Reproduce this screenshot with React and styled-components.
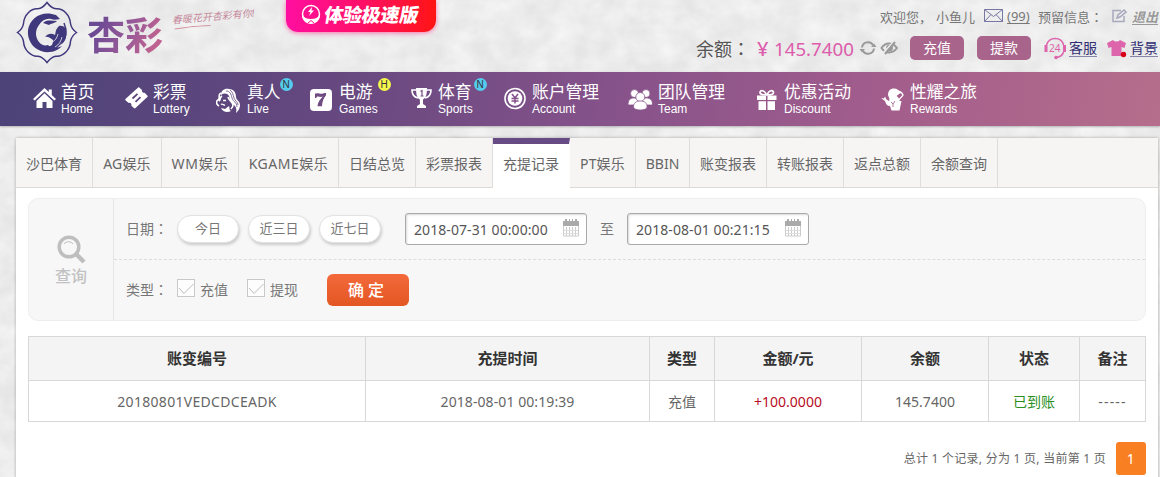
import styled, { createGlobalStyle } from "styled-components";

const sans = `"Noto Sans", "Noto Sans CJK SC", sans-serif`;

const GlobalStyle = createGlobalStyle`
    * {
        box-sizing: border-box;
    }
    body {
        margin: 0;
        background: #ececec;
        font-family: ${sans};
        font-size: 14px;
        color: #666;
        overflow: hidden;
    }
`;

const Page = styled.div`
    position: relative;
    width: 1160px;
    height: 477px;
    overflow: hidden;
`;

const Texture = styled.svg`
    position: absolute;
    top: 0;
    left: 0;
    z-index: -1;
`;

const Header = styled.header`
    display: flex;
    justify-content: space-between;
    height: 72px;
`;

const Brand = styled.div`
    display: flex;
    align-items: flex-start;
    padding: 1px 0 0 16px;
`;

const BrandName = styled.h1`
    margin: 5px 0 0 9px;
    width: 76px;
    font-size: 38px;
    line-height: 56px;
    font-weight: 700;
    white-space: nowrap;
    background: linear-gradient(115deg, #6d4a94 20%, #9a5a98 55%, #c0628f 85%);
    -webkit-background-clip: text;
    color: transparent;
`;

const Slogan = styled.div`
    margin: 8px 0 0 9px;
    width: 86px;
    font-size: 10px;
    line-height: 15px;
    font-style: italic;
    white-space: nowrap;
    color: #c58a9c;
    transform: rotate(-5deg);
    svg {
        display: block;
    }
`;

const Promo = styled.div`
    position: absolute;
    top: 0;
    left: 286px;
    display: flex;
    gap: 3px;
    width: 150px;
    height: 32px;
    padding: 3px 0 0 15px;
    border-radius: 0 0 12px 12px;
    background: linear-gradient(90deg, #ff0fa0, #ff1068 50%, #ff1414);
    box-shadow: 0 1px 5px rgba(255, 30, 130, 0.6);
    color: #fff;
    font-size: 19px;
    font-weight: 900;
    line-height: 24px;
    letter-spacing: -0.2px;
    white-space: nowrap;
    span {
        transform: skewX(-10deg);
    }
`;

const Account = styled.div`
    width: 470px;
    padding-top: 6px;
    white-space: nowrap;
`;

const Welcome = styled.div`
    display: flex;
    align-items: center;
    height: 20px;
    padding-left: 190px;
    font-size: 13px;
    color: #777;
`;

const Piece = styled.span`
    flex: none;
    width: ${(props) => props.w}px;
    text-decoration: ${(props) => (props.underline ? "underline" : "none")};
    text-underline-offset: 2px;
    svg {
        display: block;
    }
`;

// the TC face centres the full-width colon in its cell
const Colon = styled.span`
    font-family: "Noto Sans CJK TC", sans-serif;
`;

const Logout = styled.a`
    font-weight: bold;
    font-style: italic;
    text-decoration: underline;
    text-underline-offset: 2px;
    color: #999;
`;

const Balance = styled.div`
    display: flex;
    align-items: center;
    height: 30px;
    margin-top: 7px;
    padding-left: 6px;
    svg {
        display: block;
        flex: none;
    }
`;

const BalanceLabel = styled.span`
    width: 61px;
    font-size: 18px;
    color: #555;
`;

const Amount = styled.span`
    width: 103px;
    font-size: 18.7px;
    color: #dd5cab;
    b {
        display: inline-block;
        width: 17px;
        font-size: 20px;
        font-weight: 500;
    }
`;

const PinkButton = styled.button`
    width: 54px;
    height: 24px;
    margin-right: ${(props) => props.gap || 0}px;
    padding: 0 0 1px;
    border: 0;
    border-radius: 5px;
    background: #a9648c;
    color: #fff;
    font: 14px/22px ${sans};
`;

const ToolLink = styled.a`
    width: 28px;
    margin: 0 ${(props) => props.gap || 0}px 0 3px;
    border-bottom: 1px solid #8585aa;
    line-height: 17px;
    font-size: 14px;
    color: #2f2d73;
`;

const Nav = styled.nav`
    display: flex;
    height: 54px;
    padding-left: 33px;
    background: linear-gradient(98deg, #4c4379 0%, #65487f 28%, #85528a 52%, #a25d8c 76%, #b56e8b 100%);
    box-shadow: 0 1px 2px rgba(0, 0, 0, 0.25);
    color: #fff;
`;

const NavItem = styled.a`
    display: flex;
    flex: none;
    width: ${(props) => props.w}px;
    svg {
        display: block;
        margin-top: 15px;
    }
`;

const NavIcon = styled.span`
    flex: none;
    width: ${(props) => props.w}px;
`;

const NavText = styled.span`
    position: relative;
    padding-top: 10px;
    font-size: 16.8px;
    line-height: 20px;
    white-space: nowrap;
    height: 54px;
    small {
        display: block;
        font: 12px/14px "Liberation Sans", Arial, sans-serif;
    }
`;

const Badge = styled.i`
    position: absolute;
    top: 6px;
    right: ${(props) => props.right}px;
    width: 13px;
    height: 13px;
    border-radius: 50%;
    background: ${(props) => props.color};
    color: #33333f;
    font: 10px/13px "Liberation Sans", Arial, sans-serif;
    text-align: center;
`;

const Panel = styled.main`
    width: 1142px;
    height: 360px;
    margin: 12px 0 0 16px;
    background: #fff;
    box-shadow: 0 0 3px rgba(0, 0, 0, 0.3);
`;

const Tabs = styled.div`
    display: flex;
    height: 50px;
    background: #f6f5f4;
    border-bottom: 1px solid #dcdad8;
`;

const Tab = styled.a`
    width: ${(props) => props.w}px;
    height: 50px;
    padding-top: ${(props) => (props.active ? 0 : 6)}px;
    border-right: 1px solid ${(props) => (props.active ? "#fff" : "#dfdddb")};
    border-top: ${(props) => (props.active ? "6px solid #674b84" : "0")};
    background: ${(props) => (props.active ? "#fff" : "transparent")};
    line-height: 39px;
    letter-spacing: ${(props) => props.spacing}px;
    text-align: center;
    white-space: nowrap;
`;

const Filter = styled.section`
    display: flex;
    height: 123px;
    margin: 10px 12px 0;
    border: 1px solid #eee;
    border-radius: 10px;
    background: #f7f7f7;
`;

const FilterTitle = styled.div`
    display: flex;
    flex-direction: column;
    align-items: center;
    width: 85px;
    padding: 36px 0 0;
    border-right: 1px solid #e6e6e6;
    color: #c2c2c2;
    font-size: 16px;
    font-weight: 500;
    line-height: 25px;
`;

const FilterRows = styled.div`
    flex: 1;
`;

const FilterRow = styled.div`
    display: flex;
    align-items: center;
    height: 60px;
    padding-left: 12px;
    color: #777;
    & + & {
        border-top: 1px dashed #dcdcdc;
    }
`;

const Label = styled.span`
    width: 51px;
    padding-bottom: 2px;
`;

const Pill = styled.button`
    width: 62px;
    height: 28px;
    margin: 0 9px 1px 0;
    padding: 0 0 1px;
    border: 1px solid #e2e2e2;
    border-radius: 14px;
    background: #fff;
    box-shadow: 1px 2px 3px rgba(0, 0, 0, 0.18);
    color: #777;
    font: 13px/20px ${sans};
`;

const DateField = styled.div`
    display: flex;
    justify-content: space-between;
    align-items: center;
    width: 182px;
    height: 32px;
    margin-left: ${(props) => props.offset}px;
    padding: 0 7px 0 8px;
    border: 1px solid #aaa;
    border-radius: 3px;
    background: #fff;
    box-shadow: inset 1px 1px 2px rgba(0, 0, 0, 0.15);
    color: #555;
    svg {
        margin-bottom: 2px;
    }
`;

const DateText = styled.span`
    padding-top: 1px;
    letter-spacing: 0.08px;
`;

const To = styled.span`
    margin-left: 13px;
    padding-bottom: 2px;
`;

const CheckItem = styled.label`
    display: flex;
    align-items: center;
    width: 70px;
    gap: 5px;
`;

const Check = styled.span`
    width: 18px;
    height: 18px;
    margin-bottom: 3px;
    border: 1px solid #c9c9c9;
    background: #fdfdfd;
    svg {
        display: block;
    }
`;

const Submit = styled.button`
    width: 82px;
    height: 32px;
    margin-left: 10px;
    padding: 0 4px 0 0;
    border: 0;
    border-radius: 6px;
    background: linear-gradient(#f4693a, #e35724);
    color: #fff;
    font: 500 16px/30px ${sans};
`;

const Table = styled.table`
    width: 1118px;
    margin: 15px 12px 0;
    border-collapse: collapse;
    table-layout: fixed;
    text-align: center;
    th,
    td {
        padding: 0;
        border: 1px solid #d8d8d8;
    }
    th {
        height: 44px;
        padding-bottom: 2px;
        background: #f4f4f4;
        color: #333;
        font-size: 15px;
        font-weight: 700;
    }
    td {
        height: 41px;
    }
`;

const Value = styled.span`
    color: ${(props) => props.color || "#666"};
    letter-spacing: ${(props) => props.spacing || 0}px;
`;

const Footer = styled.div`
    display: flex;
    justify-content: flex-end;
    align-items: center;
    height: 34px;
    margin: 19px 12px 0;
    font-size: 12px;
    letter-spacing: 0.25px;
`;

const PageNumber = styled.a`
    width: 30px;
    height: 33px;
    margin-left: 10px;
    border-radius: 3px;
    background: #f98022;
    color: #fff;
    font-size: 14px;
    line-height: 33px;
    text-align: center;
`;

const Emblem = () => (
    <svg width="62" height="63" viewBox="0 0 62 63" fill="none">
        <path
            d="M31 1.500C34 5.500 37 7.500 40 7.800 47 7 54 14 54.500 22.500 55 26 57 29 60.500 31.500 57 34 55 37 54.500 40.500 54 49 47 56 40 55.200 37 55.500 34 57.500 31 61.500 28 57.500 25 55.500 22 55.200 15 56 8 49 7.500 40.500 7 37 5 34 1.500 31.500 5 29 7 26 7.500 22.500 8 14 15 7 22 7.800 25 7.500 28 5.500 31 1.500Z"
            stroke="#40387c"
            strokeWidth="1.500"
        />
        <path
            d="M40 14C27 9 14 16 12 29c-1 9 4 18 13 21 8 3 17 0 21-5-6 3-11 2-14-1-3 1-7 0-9-3-4-5-4-12 0-17 3-5 8-7 12-6 2 1 5 1 9 0l-4-4Z"
            fill="#40387c"
        />
        <path d="M27 22c4-4 9-2 14-2-3 3-6 2-8 4l-6-2Z" fill="#40387c" />
        <path
            d="M43 25c5-1 8 3 7 7 1 5-2 10-6 12l-6 6c-4 1-7-2-7-5 5 1 6-2 6-6-3-2-5-4-8-3 3-4 7-4 10-2 1-3 0-5 4-9Z"
            fill="#40387c"
        />
        <path d="M15 37c5 10 14 13 23 9M48 22c3 7 3 14-2 20" stroke="#40387c" strokeWidth="1.500" />
        <path d="M36 41c3-1 5-4 6-8M39 46c4-2 6-6 7-10" stroke="#eee" strokeWidth=".8" />
    </svg>
);

const HomeIcon = () => (
    <svg width="23" height="22" viewBox="0 0 23 22" fill="#fff">
        <path d="M11.500 1 0 12l1.700 1.600L11.500 4.400l9.800 9.200L23 12l-4.200-4V2.500h-3v2.600L11.500 1Z" />
        <path d="M11.500 6.200 3.500 14v7h6v-6h4v6h6v-7l-8-7.800Z" />
    </svg>
);

const TicketIcon = () => (
    <svg width="23" height="22" viewBox="0 0 23 22" fill="#fff">
        <path d="M14.500.7 17 3c-.400 1.900.900 3 2.600 2.800l2.700 2.600c.600.600.600 1 0 1.600L10.500 21c-.600.600-1 .600-1.600 0l-2.500-2.300c.400-2-.900-3.100-2.700-2.800L.700 13.500c-.600-.600-.600-1.100 0-1.700L12.900.7c.600-.600 1-.600 1.600 0Z" />
        <path d="m7.500 11.500 5-4.700M10.500 14.800l5-4.700" stroke="#5d477e" strokeWidth="1.800" />
    </svg>
);

const LiveIcon = () => (
    <svg width="26" height="27" viewBox="0 0 26 27" fill="none" stroke="#fff">
        <path
            d="M5 8C5 3 9 1 13 2c5 0 7 4 7 8 0 3 4 4 4 8 0 3-1 5-4 8 1-4 0-6-2-8-4-3-4-6-5-9-2-3-5-3-8-1Z"
            fill="#fff"
            stroke="none"
        />
        <path d="M5 6C1 8 5 11 2 13s-1 5 1 6M6 9c-3 2-1 4-3 5M12 10c1 4 4 4 5 8 0 2-1 3-2 4" strokeWidth="1.600" />
        <path d="M7 13.500h3M5 17.500c1-1 2 0 4 1" strokeWidth="1.300" />
        <path d="m5 21 4 1 4-3c1 3 0 4 2 5-4 2-8 1-10-3Z" fill="#fff" stroke="none" />
        <path d="M10 4c4 0 5 3 6 7s5 4 5 9M14 3c3 2 3 5 4 8s4 4 4 7" stroke="#65487f" strokeWidth=".8" />
    </svg>
);

const GamesIcon = () => (
    <svg width="23" height="25" viewBox="0 0 23 25">
        <rect y="2" width="22" height="22" rx="4" fill="#fff" />
        <path
            d="M5 6.500h1.500c1.500-1 3 .600 5 .300 1.300 0 2-.300 2.800-.800H16v2.300c-2.700 3.300-3.700 6.500-4 11H7.500c.200-4 2.500-7 5.300-9.800-2 .900-3.500-.100-5-.100-1 0-1.300.600-1.500 1.600H5V6.500Z"
            fill="#704b82"
        />
    </svg>
);

const TrophyIcon = () => (
    <svg width="21" height="23" viewBox="0 0 21 23" fill="#fff">
        <path d="M5 1h11c0 6-1 10-4 11.500L12 17l3 2v2H6v-2l3-2-.200-4.500C6 11 5 7 5 1Z" />
        <path d="M5 3H1c0 4 2 7 6 8M16 3h4c0 4-2 7-6 8" fill="none" stroke="#fff" strokeWidth="1.700" />
        <path d="m9.500 4.500 1.500-1V9M9.500 9h3" fill="none" stroke="#774c83" strokeWidth="1.200" />
    </svg>
);

const CoinIcon = () => (
    <svg width="23" height="23" viewBox="0 0 23 23" fill="none" stroke="#fff">
        <circle cx="11" cy="11.500" r="10" strokeWidth="1.600" />
        <circle cx="11" cy="11.500" r="7.300" fill="#fff" stroke="none" />
        <path d="m8 7 3 4 3-4M7.500 11.500h7M7.500 14h7M11 11v5.500" stroke="#855089" strokeWidth="1.500" />
    </svg>
);

const TeamIcon = () => (
    <svg width="25" height="24" viewBox="0 0 25 24" fill="#fff" stroke="#8a558b" strokeWidth=".8">
        <circle cx="6.500" cy="6.500" r="4" />
        <circle cx="18" cy="6.500" r="4" />
        <path d="M0 18c0-5 2-7 6-7s6 2 6 7H0ZM12.500 18c0-5 2-7 6-7s6 2 6 7h-12Z" />
        <circle cx="12.300" cy="10" r="4.500" />
        <path d="M5.500 20c0-4 2.500-6 6.800-6s6.800 2 6.800 6c0 4-13.600 4-13.600 0Z" />
    </svg>
);

const GiftIcon = () => (
    <svg width="21" height="24" viewBox="0 0 21 24" fill="#fff">
        <path d="M0 8.500h9V13H0V8.500ZM10.500 8.500h9V13h-9V8.500ZM1.500 14.200H9V23H1.500v-8.800ZM10.500 14.200H18V23h-7.500v-8.800Z" />
        <path
            d="M9.500 8C7 8 3 8 3 5.500S7.500 2.500 9.500 8Zm.500 0c2.500 0 6.500 0 6.500-2.500S12 2.500 10 8Z"
            fill="none"
            stroke="#fff"
            strokeWidth="1.700"
        />
    </svg>
);

const RewardsIcon = () => (
    <svg width="23" height="25" viewBox="0 0 23 25" fill="#fff">
        <path d="M7 8c0-4 2-6.500 6-6.500 3 0 5 1.500 6.500 4.500l-4 3c2 1 3 3 3 5h2l-2 9.500h-8L9 19c-3 0-4-2-5-5l-4-3 3 .500 1-2 1.500 3L8 14c1-2 0-3-1-6Z" />
        <path d="M14 4c4 0 7 1 8 4-1 2-3 3-5 6" fill="none" stroke="#fff" strokeWidth="1.400" />
        <path d="m10 15 2 2 2-3M12 17v3" fill="none" stroke="#9b5b8c" strokeWidth=".8" />
    </svg>
);

const navItems = [
    { zh: "首页", en: "Home", icon: HomeIcon, w: 92, iconW: 28 },
    { zh: "彩票", en: "Lottery", icon: TicketIcon, w: 91, iconW: 28 },
    { zh: "真人", en: "Live", icon: LiveIcon, w: 94, iconW: 31, badge: "N", right: -12 },
    { zh: "电游", en: "Games", icon: GamesIcon, w: 101, iconW: 29, badge: "H", right: -13 },
    { zh: "体育", en: "Sports", icon: TrophyIcon, w: 93, iconW: 27, badge: "N", right: -14 },
    { zh: "账户管理", en: "Account", icon: CoinIcon, w: 124, iconW: 28 },
    { zh: "团队管理", en: "Team", icon: TeamIcon, w: 129, iconW: 30 },
    { zh: "优惠活动", en: "Discount", icon: GiftIcon, w: 124, iconW: 27 },
    { zh: "性耀之旅", en: "Rewards", icon: RewardsIcon, w: 100, iconW: 29 },
];

const tabs = [
    ["沙巴体育", 77],
    ["AG娱乐", 69, 0.2],
    ["WM娱乐", 77, 0.8],
    ["KGAME娱乐", 100, 0.5],
    ["日结总览", 77],
    ["彩票报表", 77],
    ["充提记录", 77],
    ["PT娱乐", 66, 0.2],
    ["BBIN", 54],
    ["账变报表", 77],
    ["转账报表", 77],
    ["返点总额", 77],
    ["余额查询", 77],
];

const columns = [
    ["账变编号", 337],
    ["充提时间", 284],
    ["类型", 65],
    ["金额/元", 147],
    ["余额", 127],
    ["状态", 91],
    ["备注", 66],
];

const CalendarIcon = () => (
    <svg width="16" height="18" viewBox="0 0 16 18">
        <path d="M0 2h2V0h2v2h2V0h1v2h2V0h1v2h2V0h2v2h2v5H0z" fill="#aaa" />
        <path d="M.5 7v10h15V7M3.500 8v9M6.500 8v9M9.500 8v9M12.500 8v9" fill="none" stroke="#ccc" />
        <path d="M1 11.500h14M1 14.500h14" fill="none" stroke="#ddd" />
    </svg>
);

const DateInput = ({ value, offset }) => (
    <DateField offset={offset}>
        <DateText>{value}</DateText>
        <CalendarIcon />
    </DateField>
);

const CheckBox = ({ text }) => (
    <CheckItem>
        <Check>
            <svg width="16" height="16" fill="none" stroke="#bbb">
                <path d="m1 8 5 5.500L15.500 4" />
            </svg>
        </Check>
        <Label>{text}</Label>
    </CheckItem>
);

const App = () => (
    <Page>
        <GlobalStyle />
        <Texture width="1160" height="477">
            <filter id="marble">
                <feTurbulence type="fractalNoise" baseFrequency="0.04 0.05" numOctaves="5" seed="8" />
                <feColorMatrix values="0 0 0 0 1  0 0 0 0 1  0 0 0 0 1  1.6 0 0 0 -0.4" />
            </filter>
            <rect width="1160" height="477" fill="#e6e6e6" />
            <rect width="1160" height="477" filter="url(#marble)" opacity=".6" />
        </Texture>
        <Header>
            <Brand>
                <Emblem />
                <BrandName>杏彩</BrandName>
                <Slogan>
                    春暖花开杏彩有你!
                    <svg width="40" height="4" fill="none" stroke="#d595a3">
                        <path d="M2 1.500Q16 0 38 1" />
                    </svg>
                </Slogan>
            </Brand>
            <Promo>
                <svg width="20" height="22" viewBox="0 0 20 22" fill="none">
                    <circle cx="10" cy="11" r="8.500" stroke="#fff" strokeWidth="1.500" />
                    <path d="M1 12c3 3 5 4 9 4s6-1 9-4c0 5-4 9-9 9s-9-4-9-9Z" fill="#fff" />
                    <path d="m11 4-4 5h2.500L8 13l5-5.500h-2.500L11 4Z" fill="#fff" />
                    <path d="m7 20 3-2.500 3 2.500" stroke="#ff1290" />
                </svg>
                <span>体验极速版</span>
            </Promo>
            <Account>
                <Welcome>
                    <Piece w={56}>欢迎您，</Piece>
                    <Piece w={48}>小鱼儿</Piece>
                    <Piece w={23}>
                        <svg width="20" height="14" fill="none" stroke="#7777a3">
                            <path d="M.5.500h18v12H.500zM.500.500l9 7 9-7M.500 12.500l6.500-7M18.500 12.500l-6.500-7" />
                        </svg>
                    </Piece>
                    <Piece w={31} underline>
                        (99)
                    </Piece>
                    <Piece w={74}>
                        预留信息<Colon>：</Colon>
                    </Piece>
                    <Piece w={20}>
                        <svg width="15" height="14" fill="none" stroke="#a8a8bd" strokeWidth="1.500">
                            <path d="M9 1.500H1v11h11V7M5 9l1-3 6-5 2 2-6 5-3 1Z" />
                        </svg>
                    </Piece>
                    <Logout>退出</Logout>
                </Welcome>
                <Balance>
                    <BalanceLabel>
                        余额<Colon>：</Colon>
                    </BalanceLabel>
                    <Amount>
                        <b>¥</b>145.7400
                    </Amount>
                    <svg width="17" height="16" viewBox="0 0 17 16" fill="none" stroke="#999" strokeWidth="2">
                        <path d="M2 7.500a6 6 0 0 1 11-2.500M14 8.500a6 6 0 0 1-11 2.500" />
                        <path d="M11 7h5.500l-2.500-3.500zM-.500 9h5.500L2 12.500z" fill="#999" stroke="none" />
                    </svg>
                    <svg width="33" height="16" viewBox="0 0 33 16" fill="none" stroke="#999">
                        <path d="M4.500 8c4-6 11-6 15.500 0-4.500 6-11.500 6-15.500 0Z" strokeWidth="2" />
                        <circle cx="12.500" cy="8" r="3" fill="#999" />
                        <path d="m6 13.500 11-12" stroke="#eee" strokeWidth="2" />
                        <path d="m8 14 10-12" strokeWidth="2" />
                    </svg>
                    <PinkButton gap={13}>充值</PinkButton>
                    <PinkButton gap={13}>提款</PinkButton>
                    <svg width="22" height="23" viewBox="0 0 22 23" fill="none" stroke="#dc65ab">
                        <path d="M2.500 8C4 3.500 7 1.500 11 1.500s7.500 2 8.500 6.500M19.500 15c-1 4-4 5-7 5.500" strokeWidth="1.500" />
                        <path d="M2 8v7M20.500 8v7" strokeWidth="3" />
                        <circle cx="12" cy="20.500" r="1.800" fill="#dc65ab" stroke="none" />
                        <text x="5" y="14.500" fontSize="10" fill="#dc65ab" stroke="none">
                            24
                        </text>
                    </svg>
                    <ToolLink gap={10}>客服</ToolLink>
                    <svg width="20" height="19" viewBox="0 0 20 19">
                        <path d="M6 1c2 2 5 2 7 0l6 3-1.500 5-3-1v9H4.500V8l-3 1L0 4l6-3Z" fill="#dc65ab" />
                        <circle cx="16.500" cy="15.500" r="2.700" fill="#d80018" />
                    </svg>
                    <ToolLink>背景</ToolLink>
                </Balance>
            </Account>
        </Header>
        <Nav>
            {navItems.map(({ zh, en, icon: Icon, w, iconW, badge, right }) => (
                <NavItem key={en} w={w}>
                    <NavIcon w={iconW}>
                        <Icon />
                    </NavIcon>
                    <NavText>
                        {zh}
                        <small>{en}</small>
                        {badge && (
                            <Badge color={badge === "N" ? "#55cbed" : "#f5f64b"} right={right}>
                                {badge}
                            </Badge>
                        )}
                    </NavText>
                </NavItem>
            ))}
        </Nav>
        <Panel>
            <Tabs>
                {tabs.map(([name, w, spacing = 0]) => (
                    <Tab key={name} w={w} spacing={spacing} active={name === "充提记录" ? 1 : 0}>
                        {name}
                    </Tab>
                ))}
            </Tabs>
            <Filter>
                <FilterTitle>
                    <svg width="29" height="29" viewBox="0 0 29 29" fill="none" stroke="#bebebe">
                        <circle cx="12" cy="12" r="9.800" strokeWidth="3.500" />
                        <path d="m19 19 8 8" strokeWidth="4.500" />
                        <path d="M7 9c2-3 7-3 9 0" />
                    </svg>
                    查询
                </FilterTitle>
                <FilterRows>
                    <FilterRow>
                        <Label>
                            日期<Colon>：</Colon>
                        </Label>
                        <Pill>今日</Pill>
                        <Pill>近三日</Pill>
                        <Pill>近七日</Pill>
                        <DateInput value="2018-07-31 00:00:00" offset={15} />
                        <To>至</To>
                        <DateInput value="2018-08-01 00:21:15" offset={13} />
                    </FilterRow>
                    <FilterRow>
                        <Label>
                            类型<Colon>：</Colon>
                        </Label>
                        <CheckBox text="充值" />
                        <CheckBox text="提现" />
                        <Submit>确 定</Submit>
                    </FilterRow>
                </FilterRows>
            </Filter>
            <Table>
                <colgroup>
                    {columns.map(([name, w]) => (
                        <col key={name} width={w} />
                    ))}
                </colgroup>
                <thead>
                    <tr>
                        {columns.map(([name]) => (
                            <th key={name}>{name}</th>
                        ))}
                    </tr>
                </thead>
                <tbody>
                    <tr>
                        <td>
                            <Value spacing={0.3}>20180801VEDCDCEADK</Value>
                        </td>
                        <td>
                            <Value spacing={0.08}>2018-08-01 00:19:39</Value>
                        </td>
                        <td>充值</td>
                        <td>
                            <Value color="#b80d24">+100.0000</Value>
                        </td>
                        <td>145.7400</td>
                        <td>
                            <Value color="#2a8f1e">已到账</Value>
                        </td>
                        <td>
                            <Value spacing={1.2}>-----</Value>
                        </td>
                    </tr>
                </tbody>
            </Table>
            <Footer>
                总计 1 个记录, 分为 1 页, 当前第 1 页<PageNumber>1</PageNumber>
            </Footer>
        </Panel>
    </Page>
);

export default App;
